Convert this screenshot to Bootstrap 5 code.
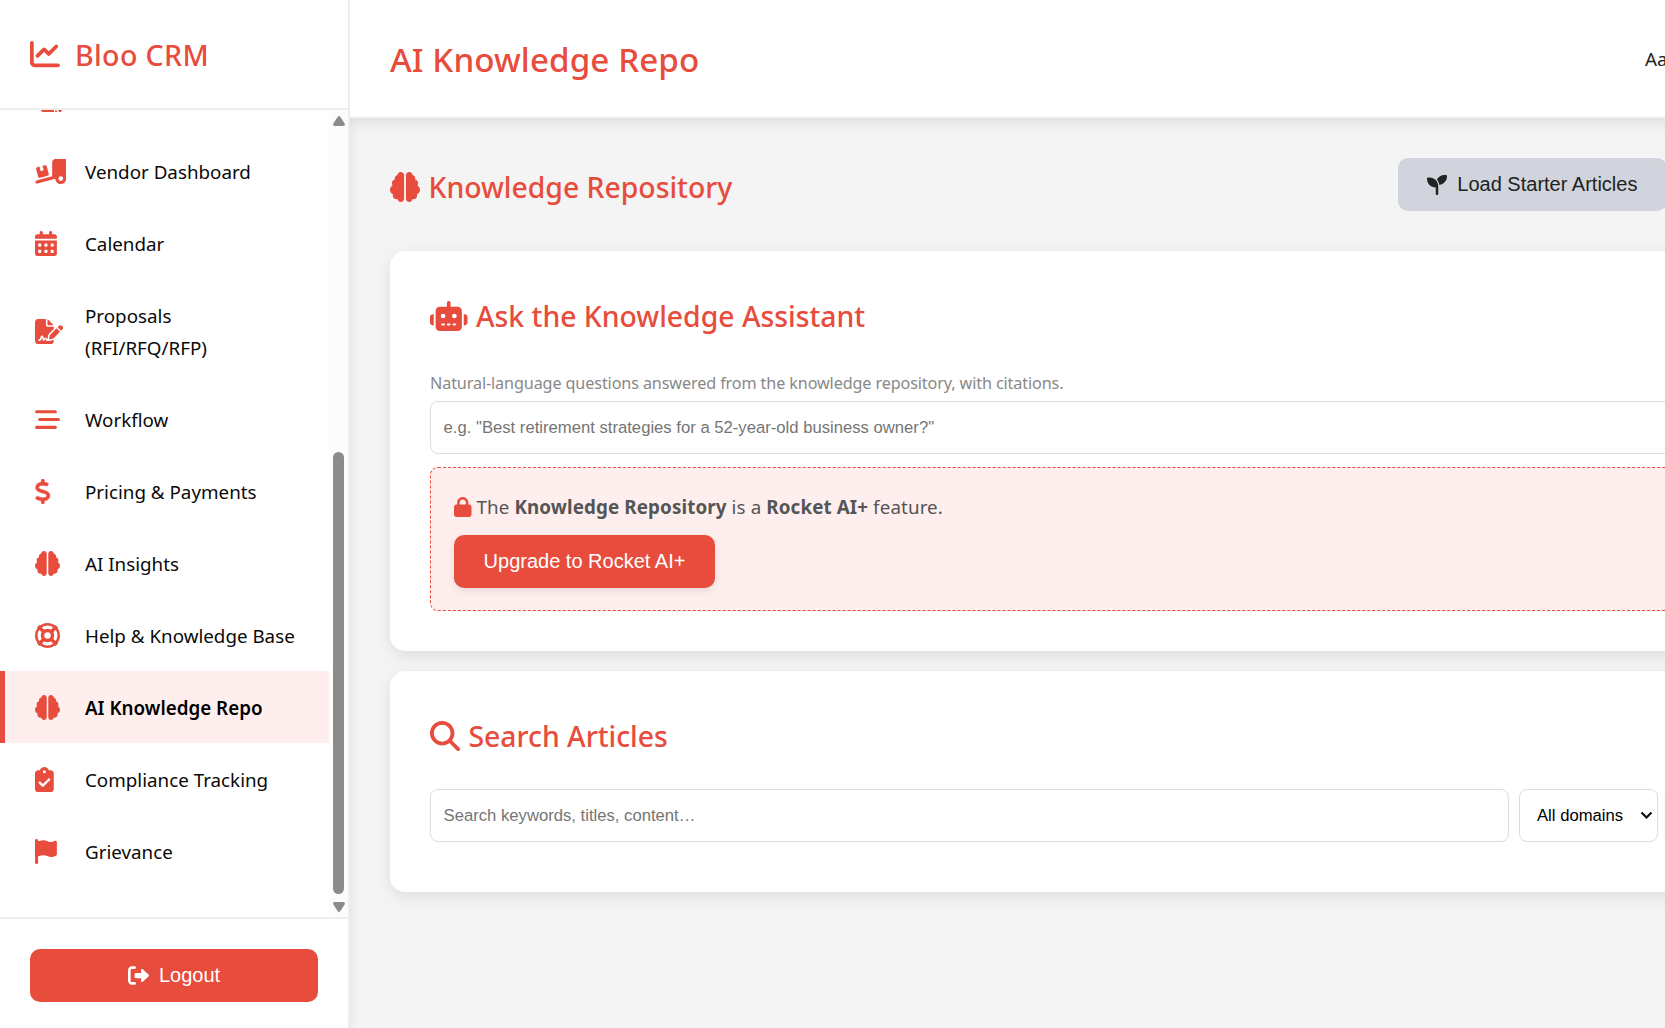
<!DOCTYPE html>
<html lang="en">
<head>
<meta charset="utf-8">
<meta name="viewport" content="width=device-width, initial-scale=1">
<title>Bloo CRM</title>
<link href="https://cdn.jsdelivr.net/npm/bootstrap@5.3.0/dist/css/bootstrap.min.css" rel="stylesheet">
<style>
:root{--brand:#e74c3c;--tint:#feefee;--line:#eee}
body{font-family:"Noto Sans","Open Sans",sans-serif;font-size:18.8px;line-height:32px;color:#222;background:#f4f4f4}
svg{fill:currentColor;display:block;flex:none}
.sidebar{width:350px;border-right:2px solid var(--line);box-shadow:0 0 12px rgba(0,0,0,.09);z-index:3}
.brand-bar{height:110px;padding:0 0 0 30px;gap:15px;border-bottom:2px solid var(--line);font-size:28.6px;font-weight:500;color:var(--brand)}
.brand-bar span{letter-spacing:.35px;padding-top:2px}
.nav-scroll{height:807px}
.side-link{min-height:72px;padding:21px 20px 19px 30px;border-left:5px solid transparent;color:#0a0a0a;text-decoration:none}
.side-link.active{background:var(--tint);border-left-color:var(--brand);font-weight:600;color:#000}
.side-icon{width:50px;color:var(--brand)}
.side-icon svg{height:25px;margin-top:-1px}
.sliver{height:25px;padding-left:41px;color:var(--brand)}
.track{width:19px;background:#fcfcfb;color:#8b8b8b;padding:6px 0 5px}
.thumb{width:11px;height:442px;margin-top:326px;border-radius:6px;background:#8b8b8b}
.side-foot{height:111px;padding:30px;border-top:2px solid var(--line)}
.action{--bs-btn-font-family:"Liberation Sans",Arial,sans-serif;--bs-btn-font-size:20px;--bs-btn-line-height:23px;--bs-btn-padding-x:29.6px;--bs-btn-padding-y:15px;--bs-btn-border-width:0;--bs-btn-border-radius:10px;height:53px;gap:10px;white-space:nowrap}
.action-brand,.action-brand:hover{background:var(--brand);color:#fff}
.action-grey,.action-grey:hover{background:#d1d4dc;color:#222}
.raised{box-shadow:0 3px 10px rgba(0,0,0,.09)}
.topbar{width:1400px;height:118px;padding:0 0 0 40px;gap:944px;border-bottom:2px solid #f5f5f5;box-shadow:0 4px 12px rgba(0,0,0,.1);z-index:4}
.topbar h1{width:311px;font-size:33.2px;font-weight:500;color:var(--brand);padding-top:4px;letter-spacing:.08px;white-space:nowrap}
.user-name{padding-top:1px}
.content{padding:40px 0 0 40px}
.head-row{width:1277px;height:53px;margin-bottom:40px}
.title{font-size:28.4px;line-height:50px;font-weight:500;color:var(--brand);gap:8.5px;letter-spacing:-.02px}
.title svg{height:30px}
.panel{width:1400px;border:0;border-radius:15px;padding:40px;box-shadow:0 5px 15px rgba(0,0,0,.09);margin-bottom:20px;background:#fff}
.panel .title{margin-bottom:28px}
.hint{font-size:16.2px;line-height:28px;letter-spacing:-.125px;color:#888;margin-bottom:4px}
.field{height:53px;border:1px solid #ddd;border-radius:8px;padding:0 12.6px;font:16.67px "Liberation Sans",Arial,sans-serif;color:#000}
.field::placeholder{color:#757575}
.upsell{margin-top:13px;height:144px;padding:23px 23px 22px;border:1px dashed var(--brand);border-radius:8px;background:var(--tint);color:#555;align-items:flex-start;letter-spacing:.11px}
.upsell p{gap:5px;margin-bottom:12px}
.upsell .btn{letter-spacing:0}
.upsell svg{color:var(--brand);height:20px}
.search-row{gap:10px;padding-bottom:10px}
.search-row input{width:1079px}
.domains{width:139px;padding:0 4px 0 17px}
</style>
<script src="https://cdn.jsdelivr.net/npm/bootstrap@5.3.0/dist/js/bootstrap.bundle.min.js"></script>
</head>
<body class="vh-100 overflow-hidden">
<svg class="d-none"><symbol id="brain" viewBox="0 0 512 512"><path d="M184 0c30.9 0 56 25.1 56 56V456c0 30.9-25.1 56-56 56c-28.9 0-52.7-21.9-55.7-50.1c-5.2 1.4-10.7 2.1-16.3 2.1c-35.3 0-64-28.7-64-64c0-7.4 1.3-14.6 3.6-21.2C21.4 367.4 0 338.2 0 304c0-31.9 18.7-59.5 45.8-72.3C37.1 220.8 32 207 32 192c0-30.7 21.6-56.3 50.4-62.6C80.8 123.9 80 118 80 112c0-29.9 20.6-55.1 48.3-62.1C131.3 21.9 155.1 0 184 0zM328 0c28.9 0 52.6 21.9 55.7 49.9c27.8 7 48.3 32.1 48.3 62.1c0 6-.8 11.9-2.4 17.4c28.8 6.2 50.4 31.9 50.4 62.6c0 15-5.1 28.8-13.8 39.7C493.3 244.5 512 272.1 512 304c0 34.2-21.4 63.4-51.6 74.8c2.3 6.6 3.6 13.8 3.6 21.2c0 35.3-28.7 64-64 64c-5.6 0-11.1-.7-16.3-2.1c-3 28.2-26.8 50.1-55.7 50.1c-30.9 0-56-25.1-56-56V56c0-30.9 25.1-56 56-56z"/></symbol></svg>
<div class="d-flex h-100">
  <aside class="sidebar bg-white d-flex flex-column flex-shrink-0 position-relative">
    <div class="brand-bar d-flex align-items-center flex-shrink-0">
      <svg width="30" height="30" viewBox="0 0 512 512"><path d="M64 64c0-17.7-14.3-32-32-32S0 46.3 0 64V400c0 44.2 35.8 80 80 80H480c17.7 0 32-14.3 32-32s-14.3-32-32-32H80c-8.8 0-16-7.2-16-16V64zm406.6 86.6c12.5-12.5 12.5-32.8 0-45.3s-32.8-12.5-45.3 0L320 210.7l-57.4-57.4c-12.5-12.5-32.8-12.5-45.3 0l-112 112c-12.5 12.5-12.5 32.8 0 45.3s32.8 12.5 45.3 0L240 221.3l57.4 57.4c12.5 12.5 32.8 12.5 45.3 0l128-128z"/></svg>
      <span>Bloo CRM</span>
    </div>
    <div class="nav-scroll d-flex flex-shrink-0 overflow-hidden">
      <nav class="flex-grow-1">
        <div class="sliver"><svg width="21" height="2" viewBox="0 0 21 2"><path d="M0 0h13v2H2Q0 2 0 0zM14 .5h2V2h-2zM17 0h4l-1 2h-2z"/></svg></div>
        <a class="side-link d-flex align-items-center" href="#"><span class="side-icon"><svg viewBox="0 0 640 512"><path d="M640 0V400c0 61.9-50.1 112-112 112c-61 0-110.5-48.7-112-109.3L48.4 502.9c-17.1 4.6-34.6-5.4-39.3-22.5s5.4-34.6 22.5-39.3L352 353.8V64c0-35.3 28.7-64 64-64H640zM576 400a48 48 0 1 0 -96 0 48 48 0 1 0 96 0zM23.1 207.7c-4.6-17.1 5.6-34.6 22.6-39.2l46.4-12.4 20.7 77.3c2.3 8.5 11.1 13.6 19.6 11.3l30.9-8.3c8.5-2.3 13.6-11.1 11.3-19.6l-20.7-77.3 46.4-12.4c17.1-4.6 34.6 5.6 39.2 22.6l41.4 154.5c4.6 17.1-5.6 34.6-22.6 39.2L103.7 384.9c-17.1 4.6-34.6-5.6-39.2-22.6L23.1 207.7z"/></svg></span>Vendor Dashboard</a>
        <a class="side-link d-flex align-items-center" href="#"><span class="side-icon"><svg viewBox="0 0 448 512"><path d="M128 0c17.7 0 32 14.3 32 32V64H288V32c0-17.7 14.3-32 32-32s32 14.3 32 32V64h48c26.5 0 48 21.5 48 48v48H0V112C0 85.5 21.5 64 48 64H96V32c0-17.7 14.3-32 32-32zM0 192H448V464c0 26.5-21.5 48-48 48H48c-26.5 0-48-21.5-48-48V192zm64 80v32c0 8.8 7.2 16 16 16h32c8.8 0 16-7.2 16-16V272c0-8.8-7.2-16-16-16H80c-8.8 0-16 7.2-16 16zm128 0v32c0 8.8 7.2 16 16 16h32c8.8 0 16-7.2 16-16V272c0-8.8-7.2-16-16-16H208c-8.8 0-16 7.2-16 16zm144-16c-8.8 0-16 7.2-16 16v32c0 8.8 7.2 16 16 16h32c8.8 0 16-7.2 16-16V272c0-8.8-7.2-16-16-16H336zM64 400v32c0 8.8 7.2 16 16 16h32c8.8 0 16-7.2 16-16V400c0-8.8-7.2-16-16-16H80c-8.8 0-16 7.2-16 16zm144-16c-8.8 0-16 7.2-16 16v32c0 8.8 7.2 16 16 16h32c8.8 0 16-7.2 16-16V400c0-8.8-7.2-16-16-16H208zm112 16v32c0 8.8 7.2 16 16 16h32c8.8 0 16-7.2 16-16V400c0-8.8-7.2-16-16-16H336c-8.8 0-16 7.2-16 16z"/></svg></span>Calendar</a>
        <a class="side-link d-flex align-items-center" href="#"><span class="side-icon"><svg viewBox="0 0 576 512"><path d="M64 0C28.7 0 0 28.7 0 64V448c0 35.3 28.7 64 64 64H320c35.3 0 64-28.7 64-64V428.7c-2.7 1.1-5.4 2-8.2 2.7l-60.1 15c-3 .7-6 1.2-9 1.4c-.9 .1-1.8 .2-2.7 .2H240c-6.1 0-11.6-3.4-14.3-8.8l-8.8-17.7c-1.7-3.4-5.1-5.5-8.8-5.5s-7.2 2.1-8.8 5.5l-8.8 17.7c-2.9 5.9-9.2 9.4-15.7 8.8s-12.1-5.1-13.9-11.3L144 381l-9.8 32.8c-6.1 20.3-24.8 34.2-46 34.2H80c-8.8 0-16-7.2-16-16s7.2-16 16-16h8.2c7.1 0 13.3-4.6 15.3-11.4l14.9-49.5c3.4-11.3 13.8-19.1 25.6-19.1s22.2 7.7 25.6 19.1l11.6 38.6c7.4-6.2 16.8-9.7 26.8-9.7c15.9 0 30.4 9 37.5 23.2l4.4 8.8h8.9c-3.1-8.8-3.7-18.4-1.4-27.8l15-60.1c2.8-11.3 8.6-21.5 16.8-29.7L384 203.6V160H256c-17.7 0-32-14.3-32-32V0H64zM256 0V128H384L256 0zM549.8 139.7c-15.6-15.6-40.9-15.6-56.6 0l-29.4 29.4 71 71 29.4-29.4c15.6-15.6 15.6-40.9 0-56.6l-14.4-14.4zM311.9 321c-4.1 4.1-7 9.2-8.4 14.9l-15 60.1c-1.4 5.5 .2 11.2 4.2 15.2s9.7 5.6 15.2 4.2l60.1-15c5.6-1.4 10.8-4.3 14.9-8.4L512.1 262.7l-71-71L311.9 321z"/></svg></span><span>Proposals<br>(RFI/RFQ/RFP)</span></a>
        <a class="side-link d-flex align-items-center" href="#"><span class="side-icon"><svg viewBox="0 0 512 512"><rect y="64" width="448" height="64" rx="32"/><rect x="64" y="224" width="448" height="64" rx="32"/><rect y="384" width="448" height="64" rx="32"/></svg></span>Workflow</a>
        <a class="side-link d-flex align-items-center" href="#"><span class="side-icon"><svg viewBox="0 0 320 512" stroke="currentColor" stroke-width="12"><path d="M160 0c17.7 0 32 14.3 32 32V67.7c1.6 .2 3.1 .4 4.7 .7c.4 .1 .7 .1 1.1 .2l48 8.8c17.4 3.2 28.9 19.9 25.7 37.2s-19.9 28.9-37.2 25.7l-47.5-8.7c-31.3-4.6-58.9-1.5-78.3 6.2s-27.2 18.3-29 28.1c-2 10.7-.5 16.7 1.2 20.4c1.8 3.9 5.5 8.3 12.8 13.2c16.3 10.7 41.3 17.7 73.7 26.3l2.9 .8c28.6 7.6 63.6 16.8 89.6 33.8c14.2 9.3 27.6 21.9 35.9 39.5c8.5 17.9 10.3 37.9 6.4 59.2c-6.9 38-33.1 63.4-65.6 76.7c-13.7 5.6-28.6 9.2-44.4 11V480c0 17.7-14.3 32-32 32s-32-14.3-32-32V445.1c-.4-.1-.9-.1-1.3-.2l-.2 0 0 0c-24.4-3.8-64.5-14.3-91.5-26.3c-16.1-7.2-23.4-26.1-16.2-42.2s26.1-23.4 42.2-16.2c20.9 9.3 55.3 18.5 75.2 21.6c31.9 4.7 58.2 2 76-5.3c16.9-6.9 24.6-16.9 26.8-28.9c1.9-10.6 .4-16.7-1.3-20.4c-1.9-4-5.6-8.4-13-13.3c-16.4-10.7-41.5-17.7-74-26.3l-2.8-.7 0 0C119.4 279.3 84.4 270 58.4 253c-14.2-9.3-27.5-22-35.8-39.6c-8.4-17.9-10.1-37.9-6.1-59.2C23.7 116 52.3 91.2 84.8 78.3c13.3-5.3 27.9-8.9 43.2-11V32c0-17.7 14.3-32 32-32z"/></svg></span>Pricing &amp; Payments</a>
        <a class="side-link d-flex align-items-center" href="#"><span class="side-icon"><svg width="25"><use href="#brain"/></svg></span>AI Insights</a>
        <a class="side-link d-flex align-items-center" href="#"><span class="side-icon"><svg viewBox="0 0 512 512"><g fill="none" stroke="currentColor"><circle cx="256" cy="256" r="230" stroke-width="52"/><circle cx="256" cy="256" r="102" stroke-width="72"/><path d="M66 66l108 108M446 66L338 174M66 446l108-108M446 446L338 338" stroke-width="72"/></g></svg></span>Help &amp; Knowledge Base</a>
        <a class="side-link active d-flex align-items-center" href="#"><span class="side-icon"><svg width="25"><use href="#brain"/></svg></span>AI Knowledge Repo</a>
        <a class="side-link d-flex align-items-center" href="#"><span class="side-icon"><svg viewBox="0 0 384 512"><path d="M192 0c-41.8 0-77.4 26.7-90.5 64H64C28.7 64 0 92.7 0 128V448c0 35.3 28.7 64 64 64H320c35.3 0 64-28.7 64-64V128c0-35.3-28.7-64-64-64H282.5C269.4 26.7 233.8 0 192 0zm0 64a32 32 0 1 1 0 64 32 32 0 1 1 0-64zM305 273L177 401c-9.4 9.4-24.6 9.4-33.9 0L79 337c-9.4-9.4-9.4-24.6 0-33.9s24.6-9.4 33.9 0l47 47L271 239c9.4-9.4 24.6-9.4 33.9 0s9.4 24.6 0 33.9z"/></svg></span>Compliance Tracking</a>
        <a class="side-link d-flex align-items-center" href="#"><span class="side-icon"><svg viewBox="0 0 448 512"><path d="M64 32C64 14.3 49.7 0 32 0S0 14.3 0 32V64 368 480c0 17.7 14.3 32 32 32s32-14.3 32-32V352l64.3-16.1c41.1-10.3 84.6-5.5 122.5 13.4c44.2 22.1 95.5 24.8 141.7 7.4l34.7-13c12.5-4.7 20.8-16.6 20.8-30V66.1c0-23-24.2-38-44.8-27.7l-9.6 4.8c-46.3 23.2-100.8 23.2-147.1 0c-35.1-17.6-75.4-22-113.5-12.5L64 48V32z"/></svg></span>Grievance</a>
      </nav>
      <div class="track d-flex flex-column align-items-center">
        <svg width="12" height="10" viewBox="0 0 12 10"><path d="M4.6 1Q6-.8 7.4 1L11.6 7.4Q12.6 10 10 10H2Q-.6 10 .4 7.4z"/></svg>
        <div class="thumb"></div>
        <svg class="mt-auto" width="12" height="10" viewBox="0 0 12 10"><path d="M4.6 9Q6 10.8 7.4 9L11.6 2.6Q12.6 0 10 0H2Q-.6 0 .4 2.6z"/></svg>
      </div>
    </div>
    <div class="side-foot flex-shrink-0">
      <button class="btn action action-brand w-100 d-flex align-items-center justify-content-center"><svg width="21" height="21" viewBox="0 0 512 512"><path d="M160 96c17.7 0 32-14.3 32-32s-14.3-32-32-32H96C43 32 0 75 0 128V384c0 53 43 96 96 96h64c17.7 0 32-14.3 32-32s-14.3-32-32-32H96c-17.7 0-32-14.3-32-32l0-256c0-17.7 14.3-32 32-32h64zM504.5 273.4c4.8-4.5 7.5-10.8 7.5-17.4s-2.7-12.9-7.5-17.4l-144-136c-7-6.6-17.2-8.4-26-4.6s-14.5 12.5-14.5 22v72H192c-17.7 0-32 14.3-32 32l0 64c0 17.7 14.3 32 32 32H320v72c0 9.6 5.7 18.2 14.5 22s19 2 26-4.6l144-136z"/></svg>Logout</button>
    </div>
  </aside>
  <main class="flex-grow-1 overflow-hidden">
    <header class="topbar bg-white d-flex align-items-center position-relative">
      <h1 class="mb-0">AI Knowledge Repo</h1>
      <div class="user-name">Aa</div>
    </header>
    <div class="content">
      <div class="head-row d-flex align-items-center justify-content-between">
        <h2 class="title d-flex align-items-center m-0 pt-1"><svg width="30"><use href="#brain"/></svg>Knowledge Repository</h2>
        <button class="btn action action-grey d-flex align-items-center"><svg width="20" height="20" viewBox="0 0 512 512"><path d="M512 32c0 113.6-84.6 207.5-194.2 222c-7.1-53.4-30.6-101.6-65.3-139.3C290.8 46.3 364 0 448 0h32c17.7 0 32 14.3 32 32zM0 96C0 78.3 14.3 64 32 64H64c123.7 0 224 100.3 224 224v32V480c0 17.7-14.3 32-32 32s-32-14.3-32-32V320C100.3 320 0 219.7 0 96z"/></svg>Load Starter Articles</button>
      </div>
      <section class="panel">
        <h2 class="title d-flex align-items-center mt-0"><svg width="37.5" viewBox="0 0 640 512"><path d="M320 0c17.7 0 32 14.3 32 32V96H472c39.8 0 72 32.2 72 72V440c0 39.8-32.2 72-72 72H168c-39.8 0-72-32.2-72-72V168c0-39.8 32.2-72 72-72H288V32c0-17.7 14.3-32 32-32zM208 384c-8.8 0-16 7.2-16 16s7.2 16 16 16h32c8.8 0 16-7.2 16-16s-7.2-16-16-16H208zm96 0c-8.8 0-16 7.2-16 16s7.2 16 16 16h32c8.8 0 16-7.2 16-16s-7.2-16-16-16H304zm96 0c-8.8 0-16 7.2-16 16s7.2 16 16 16h32c8.8 0 16-7.2 16-16s-7.2-16-16-16H400zM264 256a40 40 0 1 0 -80 0 40 40 0 1 0 80 0zm152 40a40 40 0 1 0 0-80 40 40 0 1 0 0 80zM48 224H64V416H48c-26.5 0-48-21.5-48-48V272c0-26.5 21.5-48 48-48zm544 0c26.5 0 48 21.5 48 48v96c0 26.5-21.5 48-48 48H576V224h16z"/></svg>Ask the Knowledge Assistant</h2>
        <p class="hint">Natural-language questions answered from the knowledge repository, with citations.</p>
        <input class="field w-100 d-block" type="text" placeholder="e.g. &quot;Best retirement strategies for a 52-year-old business owner?&quot;">
        <div class="upsell d-flex flex-column">
          <p class="d-flex align-items-center mt-0"><svg width="17.5" viewBox="0 0 448 512"><path d="M144 144v48H304V144c0-44.2-35.8-80-80-80s-80 35.8-80 80zM80 192V144C80 64.5 144.5 0 224 0s144 64.5 144 144v48h16c35.3 0 64 28.7 64 64V448c0 35.3-28.7 64-64 64H64c-35.3 0-64-28.7-64-64V256c0-35.3 28.7-64 64-64H80z"/></svg><span>The <b>Knowledge Repository</b> is a <b>Rocket AI+</b> feature.</span></p>
          <button class="btn action action-brand raised">Upgrade to Rocket AI+</button>
        </div>
      </section>
      <section class="panel">
        <h2 class="title d-flex align-items-center mt-0"><svg width="30" viewBox="0 0 512 512"><path d="M416 208c0 45.9-14.9 88.3-40 122.7L502.6 457.4c12.5 12.5 12.5 32.8 0 45.3s-32.8 12.5-45.3 0L330.7 376c-34.4 25.2-76.8 40-122.7 40C93.1 416 0 322.9 0 208S93.1 0 208 0S416 93.1 416 208zM208 352a144 144 0 1 0 0-288 144 144 0 1 0 0 288z"/></svg>Search Articles</h2>
        <div class="search-row d-flex">
          <input class="field" type="text" placeholder="Search keywords, titles, content…">
          <div class="field domains bg-white d-flex align-items-center justify-content-between" role="combobox">All domains
            <svg width="13" height="9" viewBox="0 0 13 9"><path d="M1.5 1.5l5 5 5-5" stroke="#111" stroke-width="2.2" style="fill:none"/></svg>
          </div>
          <div class="action action-brand raised rounded-3 flex-grow-1"></div>
        </div>
      </section>
    </div>
  </main>
</div>
</body>
</html>
